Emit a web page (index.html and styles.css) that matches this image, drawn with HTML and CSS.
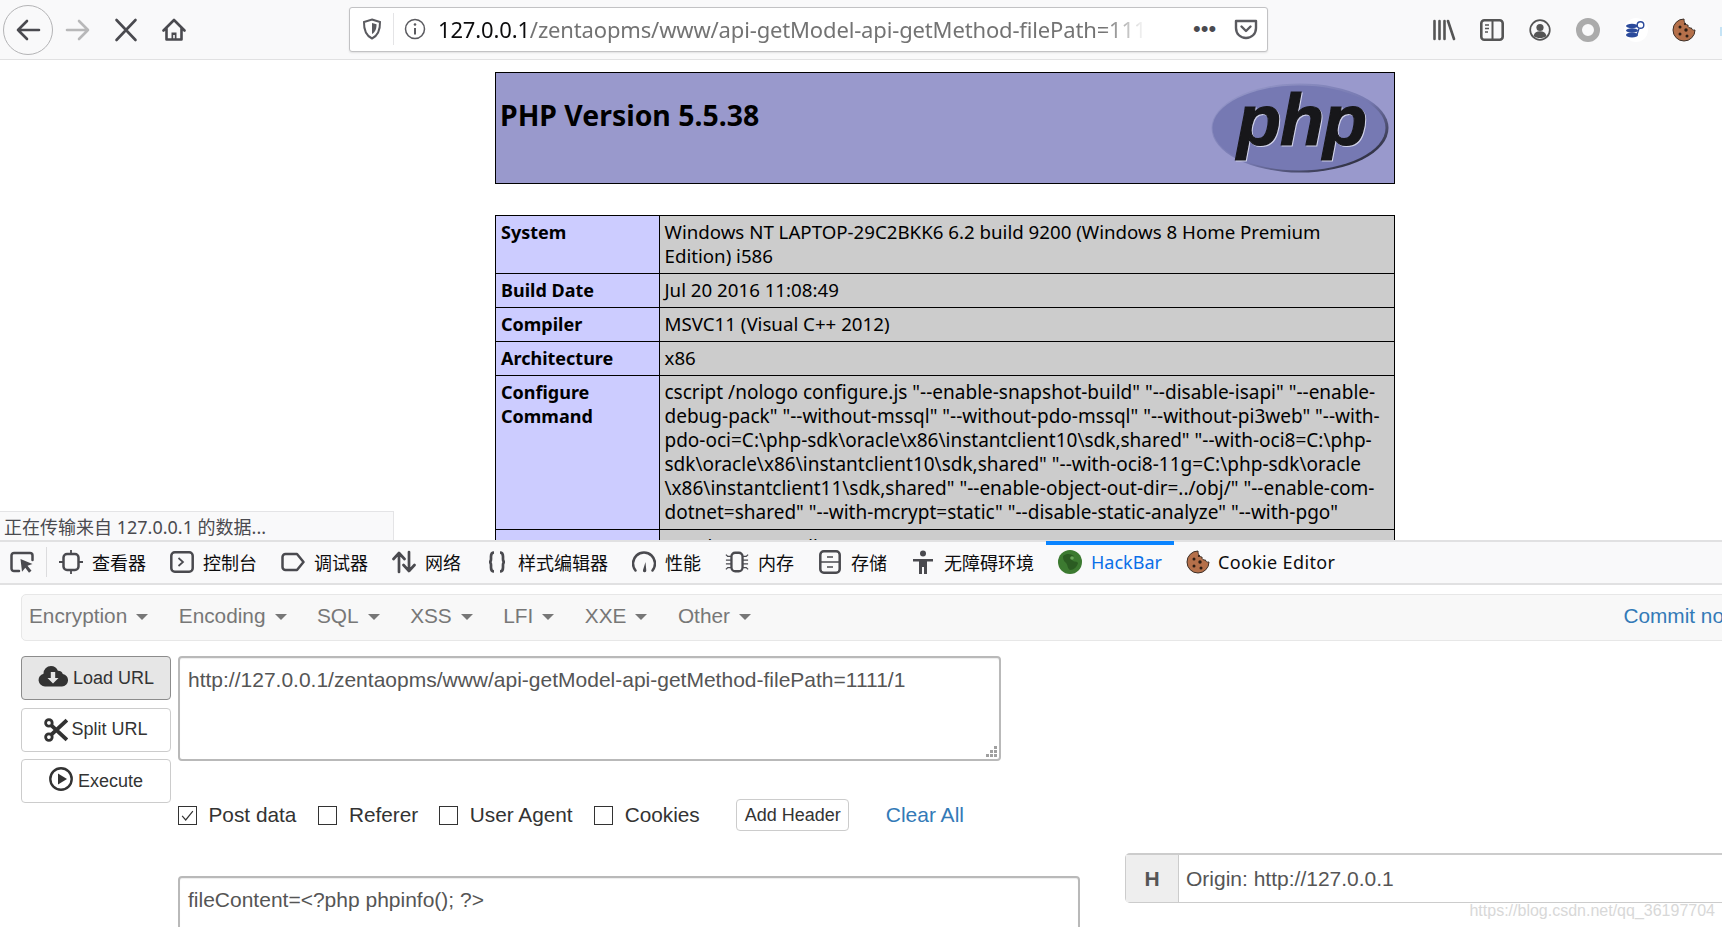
FILE: index.html
```html
<!DOCTYPE html>
<html lang="zh">
<head>
<meta charset="utf-8">
<title>phpinfo()</title>
<link rel="stylesheet" href="styles.css">
</head>
<body>
<div class="screen">
  <header class="navbar">
    <button class="back" aria-label="back">
      <svg viewBox="0 0 26 24" width="26" height="24"><path d="M24 12H3M12 3l-9 9 9 9" fill="none" stroke="#4a4a4f" stroke-width="2.6" stroke-linecap="round" stroke-linejoin="round"/></svg>
    </button>
    <span class="navbtn"><svg viewBox="0 0 26 24" width="26" height="24"><path d="M2 12h21M14 3l9 9-9 9" fill="none" stroke="#b8b8b9" stroke-width="2.6" stroke-linecap="round" stroke-linejoin="round"/></svg></span>
    <span class="navbtn"><svg viewBox="0 0 24 24" width="24" height="24"><path d="M2.500 2l19 20M21.500 2l-19 20" fill="none" stroke="#4a4a4f" stroke-width="2.600" stroke-linecap="round"/></svg></span>
    <span class="navbtn"><svg viewBox="0 0 24 24" width="24" height="24"><path d="M1.500 12.500L12 2l10.500 10.500M4.500 10v11.500h15V10" fill="none" stroke="#4a4a4f" stroke-width="2.600" stroke-linecap="round" stroke-linejoin="round"/><path d="M9.500 22v-7.500h5V22zM11.200 17v5h1.600v-5z" fill="#4a4a4f" fill-rule="evenodd"/></svg></span>
    <div class="urlbar">
      <span class="url-shield"><svg viewBox="0 0 20 22" width="20" height="22"><path d="M10 1.500l8 2.500c.2 7.500-1.800 13.500-8 16.500C3.800 17.500 1.800 11.500 2 4z" fill="none" stroke="#5a5a5f" stroke-width="2"/><path d="M10 5l4.500 1.300C14.600 10.500 13.500 14 10 16z" fill="#5a5a5f"/></svg></span>
      <span class="url-info"><svg viewBox="0 0 22 22" width="22" height="22"><circle cx="11" cy="11" r="9.500" fill="none" stroke="#5a5a5f" stroke-width="1.500"/><path d="M11 10v6.500" stroke="#5a5a5f" stroke-width="2"/><circle cx="11" cy="6.500" r="1.300" fill="#5a5a5f"/></svg></span>
      <div class="url-text"><span class="url-host">127.0.0.1</span>/zentaopms/www/api-getModel-api-getMethod-filePath=1111/1</div>
      <span class="url-dots">•••</span>
      <span class="url-pocket"><svg viewBox="0 0 24 22" width="24" height="22"><path d="M2 3h20v7c0 6-4.500 10-10 10S2 16 2 10z" fill="none" stroke="#5a5a5f" stroke-width="2.400" stroke-linejoin="round"/><path d="M7.500 8.500L12 13l4.500-4.500" fill="none" stroke="#5a5a5f" stroke-width="2.400" stroke-linecap="round" stroke-linejoin="round"/></svg></span>
    </div>
    <div class="nav-right">
      <span class="navbtn"><svg viewBox="0 0 24 24" width="24" height="24"><path d="M2.500 3v18M7.500 3v18M12.500 3v18" stroke="#555" stroke-width="2.600" stroke-linecap="round"/><path d="M16 3l6 18" stroke="#555" stroke-width="2.600" stroke-linecap="round"/></svg></span>
      <span class="navbtn"><svg viewBox="0 0 24 22" width="24" height="22"><rect x="1.300" y="1.300" width="21.400" height="19.400" rx="3" fill="none" stroke="#555" stroke-width="2.600"/><path d="M12.500 2v18" stroke="#555" stroke-width="2"/><path d="M5 6h4M5 9.500h4M5 13h3" stroke="#555" stroke-width="1.500"/></svg></span>
      <span class="navbtn"><svg viewBox="0 0 22 22" width="22" height="22"><circle cx="11" cy="11" r="9.800" fill="none" stroke="#555" stroke-width="1.700"/><circle cx="11" cy="8.500" r="3.600" fill="#555"/><path d="M4.500 17c.8-3.300 3.300-4.700 6.500-4.700s5.700 1.400 6.500 4.700c-3.500 2.800-9.500 2.800-13 0z" fill="#555"/></svg></span>
      <span class="navbtn"><svg viewBox="0 0 24 24" width="24" height="24"><circle cx="12" cy="12" r="9" fill="none" stroke="#ababab" stroke-width="6"/></svg></span>
      <span class="navbtn"><svg viewBox="0 0 24 24" width="24" height="24"><circle cx="12" cy="12" r="12" fill="#fff"/><ellipse cx="8" cy="8" rx="6" ry="2.200" fill="#2b4a9b"/><ellipse cx="8" cy="12.500" rx="6" ry="2.200" fill="#2b4a9b"/><ellipse cx="8" cy="17" rx="6" ry="2.400" fill="#2b4a9b"/><circle cx="16.500" cy="7" r="3.300" fill="none" stroke="#2b4a9b" stroke-width="1.400"/><path d="M15 10.500l-2 6" stroke="#2b4a9b" stroke-width="1.400"/></svg></span>
      <span class="navbtn"><svg viewBox="0 0 24 24" width="24" height="24"><path d="M12 1a11 11 0 1 0 11 11c-2 .5-3.500-.5-3.500-2-2 .5-4-1-3.500-3-2 0-4-2-4-6z" fill="#b5704a" stroke="#3d3028" stroke-width="1"/><circle cx="8" cy="9" r="1.500" fill="#2a1c14"/><circle cx="14" cy="12" r="1.700" fill="#2a1c14"/><circle cx="8" cy="16" r="1.500" fill="#2a1c14"/><circle cx="15" cy="18" r="1.500" fill="#2a1c14"/><circle cx="13" cy="6" r="1.100" fill="#2a1c14"/></svg></span>
    </div>
    <span class="edge-sliver"></span>
  </header>

  <main class="viewport">
    <div class="phpinfo">
      <table class="php-table php-head">
        <tr class="h">
          <td>
            <svg class="php-logo" viewBox="0 0 178 90" width="178" height="90" role="img" aria-label="PHP logo">
              <defs><linearGradient id="rim" x1="0" y1="0" x2="1" y2="1"><stop offset="0" stop-color="#9a9ccc"/><stop offset=".55" stop-color="#7578b0"/><stop offset="1" stop-color="#111"/></linearGradient></defs>
              <ellipse cx="89" cy="45" rx="88.500" ry="44.500" fill="url(#rim)"/>
              <ellipse cx="88" cy="45" rx="86.500" ry="42.500" fill="#7679b3"/>
              <text x="26" y="62" class="php-mark">php</text>
            </svg>
            <h1 class="p">PHP Version 5.5.38</h1>
          </td>
        </tr>
      </table>
      <table class="php-table php-info">
        <colgroup><col class="col-e"><col></colgroup>
        <tr><td class="e">System</td><td class="v">Windows NT LAPTOP-29C2BKK6 6.2 build 9200 (Windows 8 Home Premium<br>Edition) i586</td></tr>
        <tr><td class="e">Build Date</td><td class="v">Jul 20 2016 11:08:49</td></tr>
        <tr><td class="e">Compiler</td><td class="v">MSVC11 (Visual C++ 2012)</td></tr>
        <tr><td class="e">Architecture</td><td class="v">x86</td></tr>
        <tr><td class="e">Configure<br>Command</td><td class="v v-cfg">cscript /nologo configure.js "--enable-snapshot-build" "--disable-isapi" "--enable-<br>debug-pack" "--without-mssql" "--without-pdo-mssql" "--without-pi3web" "--with-<br>pdo-oci=C:\php-sdk\oracle\x86\instantclient10\sdk,shared" "--with-oci8=C:\php-<br>sdk\oracle\x86\instantclient10\sdk,shared" "--with-oci8-11g=C:\php-sdk\oracle<br>\x86\instantclient11\sdk,shared" "--enable-object-out-dir=../obj/" "--enable-com-<br>dotnet=shared" "--with-mcrypt=static" "--disable-static-analyze" "--with-pgo"</td></tr>
        <tr><td class="e">Server API</td><td class="v">Apache 2.0 Handler</td></tr>
      </table>
    </div>
    <div class="status">正在传输来自 127.0.0.1 的数据...</div>
  </main>

  <nav class="devtools">
    <span class="picker"><svg viewBox="0 0 24 24" width="24" height="24"><path d="M9 21H4a2.500 2.500 0 0 1-2.500-2.500v-13A2.500 2.500 0 0 1 4 3h16a2.500 2.500 0 0 1 2.500 2.500V10" fill="none" stroke="#4a4a4f" stroke-width="2.500" stroke-linecap="round"/><path d="M10.500 9l12 5-5 1.800 4 5-2.500 2-3.700-5-3.300 4z" fill="#4a4a4f"/></svg></span>
    <span class="dt-sep"></span>
    <a class="tab"><svg viewBox="0 0 24 24"><rect x="4.500" y="4" width="15" height="16" rx="3.500" fill="none" stroke="#4a4a4f" stroke-width="2.500"/><path d="M12 0v4M12 20v4M0 12h4.500M19.500 12H24" stroke="#4a4a4f" stroke-width="1.800"/></svg>查看器</a>
    <a class="tab"><svg viewBox="0 0 24 24"><rect x="1.300" y="2.300" width="21.400" height="19.400" rx="3.500" fill="none" stroke="#4a4a4f" stroke-width="2.500"/><path d="M8.500 8l4.500 4-4.500 4" fill="none" stroke="#4a4a4f" stroke-width="1.700"/></svg>控制台</a>
    <a class="tab"><svg viewBox="0 0 24 24"><path d="M4.500 4h11.500l6.500 8-6.500 8H4.500a3 3 0 0 1-3-3V7a3 3 0 0 1 3-3z" fill="none" stroke="#4a4a4f" stroke-width="2.500" stroke-linejoin="round"/></svg>调试器</a>
    <a class="tab"><svg viewBox="0 0 24 24"><path d="M7 22V3M1.500 9L7 3l5.500 6M17 2v19M11.500 15l5.500 6 5.500-6" fill="none" stroke="#4a4a4f" stroke-width="2.700" stroke-linecap="round" stroke-linejoin="round"/></svg>网络</a>
    <a class="tab"><svg viewBox="0 0 24 24"><path d="M9 2.500c-2.500 0-3 1.500-3 4v2.500c0 2-.8 3-2 3 1.200 0 2 1 2 3v2.500c0 2.500.5 4 3 4M15 2.500c2.500 0 3 1.500 3 4v2.500c0 2 .8 3 2 3-1.200 0-2 1-2 3v2.500c0 2.500-.5 4-3 4" fill="none" stroke="#4a4a4f" stroke-width="2.700"/></svg>样式编辑器</a>
    <a class="tab"><svg viewBox="0 0 24 24"><path d="M3.500 20.500A11 11 0 1 1 20.500 20.500" fill="none" stroke="#4a4a4f" stroke-width="2.500" stroke-linecap="round"/><path d="M11 20l2.500-8 .8 8.500a1.700 1.700 0 1 1-3.300-.5z" fill="#4a4a4f"/></svg>性能</a>
    <a class="tab"><svg viewBox="0 0 26 24"><rect x="7" y="2" width="12" height="20" rx="4" fill="none" stroke="#4a4a4f" stroke-width="2.500"/><path d="M7 6H3L1 4M7 10H1M7 14H1M7 18H3l-2 2M19 6h4l2-2M19 10h6M19 14h6M19 18h4l2 2" fill="none" stroke="#4a4a4f" stroke-width="1.400"/></svg>内存</a>
    <a class="tab"><svg viewBox="0 0 22 24"><rect x="1.300" y="1.300" width="19.400" height="21.400" rx="3.500" fill="none" stroke="#4a4a4f" stroke-width="2.500"/><path d="M2 12h18M8 7h6M8 17h6" stroke="#4a4a4f" stroke-width="1.700"/></svg>存储</a>
    <a class="tab"><svg viewBox="0 0 22 24"><circle cx="11" cy="3.500" r="3" fill="#4a4a4f"/><path d="M1 9h20v2.500h-6V24h-3v-7h-2v7H7V11.500H1z" fill="#4a4a4f"/></svg>无障碍环境</a>
    <a class="tab tab-active"><svg viewBox="0 0 24 24"><circle cx="12" cy="12" r="12" fill="#3c7a30"/><path d="M5 6c4-3 8-2 11 0-2 1-3 3-1 5 2 1 4 0 5 2-1 4-4 7-8 7-3-2-2-5-4-7s-3-3-3-7z" fill="#2b5c22"/><circle cx="14" cy="8" r="1.800" fill="#6aa75a"/></svg>HackBar</a>
    <a class="tab tab-cookie"><svg viewBox="0 0 24 24"><path d="M12 1a11 11 0 1 0 11 11c-2 .5-3.500-.5-3.500-2-2 .5-4-1-3.500-3-2 0-4-2-4-6z" fill="#b5704a" stroke="#3d3028" stroke-width="1"/><circle cx="8" cy="9" r="1.500" fill="#2a1c14"/><circle cx="14" cy="12" r="1.700" fill="#2a1c14"/><circle cx="8" cy="16" r="1.500" fill="#2a1c14"/><circle cx="15" cy="18" r="1.500" fill="#2a1c14"/><circle cx="13" cy="6" r="1.100" fill="#2a1c14"/></svg>Cookie Editor</a>
  </nav>

  <section class="hackbar">
    <div class="hb-nav">
      <span class="hb-menu">Encryption<i class="caret"></i></span>
      <span class="hb-menu">Encoding<i class="caret"></i></span>
      <span class="hb-menu">SQL<i class="caret"></i></span>
      <span class="hb-menu">XSS<i class="caret"></i></span>
      <span class="hb-menu">LFI<i class="caret"></i></span>
      <span class="hb-menu">XXE<i class="caret"></i></span>
      <span class="hb-menu">Other<i class="caret"></i></span>
      <a class="hb-commit">Commit now</a>
    </div>
    <div class="hb-body">
      <div class="hb-actions">
        <button class="hb-btn hb-btn-on"><svg class="btn-ico" viewBox="0 0 30 22" width="30" height="22"><path d="M7 21.500a6.500 6.500 0 0 1-1.500-12.800A7.500 7.500 0 0 1 13 1c3.200 0 5.800 2 6.900 4.800a5 5 0 0 1 4.900 3.200A6.300 6.300 0 0 1 24 21.500z" fill="#333"/><path d="M12.800 7h4.400v6h3.300L15 18.500 9.500 13h3.300z" fill="#e6e6e6"/></svg>Load URL</button>
        <button class="hb-btn hb-btn-cut"><svg viewBox="0 0 22 22" width="24" height="24"><path d="M7 7l14 13M7 15L21 2" fill="none" stroke="#333" stroke-width="3.600"/><circle cx="4.500" cy="4.500" r="3" fill="none" stroke="#333" stroke-width="2.600"/><circle cx="4.500" cy="17.500" r="3" fill="none" stroke="#333" stroke-width="2.600"/></svg>Split URL</button>
        <button class="hb-btn"><svg class="btn-ico" viewBox="0 0 24 24" width="24" height="24"><circle cx="12" cy="12" r="10.700" fill="none" stroke="#333" stroke-width="2.400"/><path d="M9 6.500l9 5.500-9 5.500z" fill="#333"/></svg>Execute</button>
      </div>
      <div class="hb-main">
        <div class="url-wrap">
          <textarea class="hb-input hb-url" spellcheck="false">http://127.0.0.1/zentaopms/www/api-getModel-api-getMethod-filePath=1111/1</textarea>
          <svg class="grip" viewBox="0 0 11 11" width="11" height="11"><path d="M8 0h3v3H8zM8 4h3v3H8zM4 4h3v3H4zM8 8h3v3H8zM4 8h3v3H4zM0 8h3v3H0z" fill="#a0a0a0"/></svg>
        </div>
        <div class="hb-opts">
          <label class="opt opt-post"><span class="cb"><svg viewBox="0 0 19 19" width="17" height="17"><path d="M3.500 10l4 4.500 8-10" fill="none" stroke="#333" stroke-width="1.300"/></svg></span>Post data</label>
          <label class="opt opt-ref"><span class="cb"></span>Referer</label>
          <label class="opt opt-ua"><span class="cb"></span>User Agent</label>
          <label class="opt opt-ck"><span class="cb"></span>Cookies</label>
          <button class="hb-add">Add Header</button>
          <a class="hb-clear">Clear All</a>
        </div>
        <div class="hb-lower">
          <textarea class="hb-input hb-post" spellcheck="false">fileContent=&lt;?php phpinfo(); ?&gt;</textarea>
          <div class="hb-header"><span class="hb-h">H</span><span class="hb-hval">Origin: http://127.0.0.1</span></div>
        </div>
      </div>
    </div>
    <span class="watermark">https://blog.csdn.net/qq_36197704</span>
  </section>
</div>
</body>
</html>
```

FILE: styles.css
```css
* { box-sizing: border-box; }
html, body { margin: 0; height: 100%; background: #fff; overflow: hidden; }
button, textarea { font: inherit; }
.screen { width: 1722px; height: 927px; display: flex; flex-direction: column; overflow: hidden; font-family: "Liberation Sans", Arial, sans-serif; }

/* browser toolbar */
.navbar { flex: 0 0 60px; display: flex; align-items: center; padding-left: 3px; background: #f9f9fa; border-bottom: 1px solid #e1e1e2; }
.back { width: 50px; height: 50px; padding: 0; border: 1px solid #b4b4b6; border-radius: 50%; background: #f9f9fa; display: flex; align-items: center; justify-content: center; margin-right: 1px; }
.navbtn { width: 48px; height: 48px; flex: none; display: flex; align-items: center; justify-content: center; }
.urlbar { width: 919px; height: 45px; margin-top: -1px; margin-left: 151px; flex: none; display: flex; align-items: center; background: #fff; border: 1px solid #c2c2c4; border-radius: 3px; box-shadow: 0 1px 2px rgba(0,0,0,.1); }
.url-shield { width: 44px; display: flex; justify-content: center; border-right: 1px solid #e4e4e6; height: 32px; align-items: center; }
.url-info { width: 42px; display: flex; justify-content: center; }
.url-text { width: 708px; margin-left: 2px; white-space: nowrap; overflow: hidden; font: 22px "Noto Sans", sans-serif; letter-spacing: -.15px; color: #737373; -webkit-mask-image: linear-gradient(to right, #000 94%, transparent 100%); mask-image: linear-gradient(to right, #000 94%, transparent 100%); }
.url-host { color: #0c0c0d; }
.url-dots { margin-left: 47px; width: 30px; font-size: 22px; line-height: 22px; color: #4a4a4f; }
.url-pocket { margin-left: 11px; display: flex; }
.nav-right { display: flex; margin-left: 152px; }
.edge-sliver { width: 2px; height: 9px; background: #c5e3f5; position: absolute; left: 1720px; top: 27px; }

/* page content */
.viewport { flex: 0 0 480px; position: relative; overflow: hidden; background: #fff; }
.phpinfo { width: 900px; margin-left: 495px; padding-top: 12px; font-family: "Noto Sans", sans-serif; color: #000; }
.php-table { width: 900px; border-collapse: collapse; table-layout: fixed; }
.php-table td { border: 1px solid #000; vertical-align: top; }
.php-head { margin-bottom: 31px; }
.h td { background: #9999cc; height: 111px; padding: 5px 4px; }
.p { margin: 20px 0 0; font-size: 28.400px; line-height: 34px; font-weight: 700; }
.php-logo { float: right; margin: 5px 1px 0 0; }
.php-mark { font: italic 700 72px "Liberation Sans", sans-serif; fill: #17171a; stroke: #17171a; stroke-width: 1.200px; letter-spacing: -1px; filter: drop-shadow(1px 1px 0 #d0d2e8); }
.col-e { width: 163.500px; }
.e, .v { line-height: 24px; padding: 3.500px 5px 5.500px; }
.e { font-size: 18px; background: #ccccff; font-weight: 700; }
.v { font-size: 18.700px; background: #cccccc; white-space: nowrap; overflow: hidden; }
.v-cfg { font-size: 19px; }
.status { position: absolute; left: 0; bottom: 0; width: 394px; height: 29px; padding: 2px 0 0 4px; background: #f9f9fa; border: 1px solid #e4e4e6; border-width: 1px 1px 0 0; font: 18px/26px "Noto Sans", "Noto Sans CJK SC", sans-serif; color: #4a4a4f; white-space: nowrap; }

/* devtools tabs */
.devtools { flex: 0 0 45px; display: flex; align-items: center; padding-bottom: 2px; background: #f9f9fa; border-top: 2px solid #e1e1e2; border-bottom: 2px solid #e1e1e2; font: 18px "Noto Sans", "Noto Sans CJK SC", sans-serif; color: #0c0c0d; }
.picker { width: 46px; padding-left: 10px; display: flex; }
.dt-sep { width: 1px; height: 30px; background: #dcdcde; }
.tab { display: flex; align-items: center; gap: 9px; height: 39px; padding: 0 12px; white-space: nowrap; position: relative; }
.tab svg { width: 24px; height: 24px; flex: none; }
.tab-active { color: #0a6fe8; }
.tab-active::before { content: ""; position: absolute; left: 0; right: 0; top: -1px; height: 4px; background: #0a84ff; }
.tab-cookie { gap: 8px; letter-spacing: .35px; }

/* hackbar */
.hackbar { flex: 1; min-height: 0; position: relative; overflow: hidden; background: #fff; font-size: 20.800px; color: #333; }
.hb-nav { height: 47px; margin: 9px -60px 0 21px; display: flex; align-items: center; padding: 0 0 4px 7px; background: #f8f8f8; border: 1px solid #e7e7e7; border-radius: 5px; color: #777; }
.hb-menu { white-space: nowrap; margin-right: 30.500px; display: flex; align-items: center; }
.caret { width: 0; height: 0; margin-left: 9px; border-top: 6px solid #777; border-left: 6px solid transparent; border-right: 6px solid transparent; margin-top: 2px; }
.hb-commit { margin-left: auto; margin-right: 42px; color: #337ab7; white-space: nowrap; }
.hb-body { display: flex; gap: 7px; margin: 15px 0 0 21px; }
.hb-actions { width: 150px; flex: none; display: flex; flex-direction: column; gap: 7.500px; }
.hb-btn { height: 44px; padding: 0; display: flex; align-items: center; justify-content: center; gap: 5px; font-size: 18px; color: #333; background: #fff; border: 1px solid #ccc; border-radius: 4px; }
.hb-btn-cut { gap: 3px; }
.btn-ico { margin-top: -5px; }
.hb-btn-on { background: #e6e6e6; border-color: #8c8c8c; }
.hb-main { flex: 1; min-width: 0; }
.url-wrap { position: relative; width: 823px; }
.grip { position: absolute; right: 4px; bottom: 4px; }
.hb-input { display: block; padding: 8px 8px; border: 2px solid #b9b9b9; border-radius: 4px; color: #555; line-height: 28px; font-size: 21px; font-family: "Liberation Sans", Arial, sans-serif; background: #fff; outline: none; resize: none; box-shadow: inset 0 1px 1px rgba(0,0,0,.075); }
.hb-url { width: 823px; height: 105px; }
.hb-opts { display: flex; align-items: center; height: 32px; margin-top: 38px; }
.opt { display: flex; align-items: center; gap: 11.500px; white-space: nowrap; }
.cb { width: 19px; height: 19px; flex: none; border: 1px solid #333; display: flex; align-items: center; justify-content: center; background: #fff; }
.opt-post { margin-right: 22px; }
.opt-ref { margin-right: 21px; }
.opt-ua { margin-right: 21.500px; }
.opt-ck { margin-right: 36.500px; }
.hb-add { height: 32px; width: 113px; padding: 0; font-size: 18px; color: #333; background: #fff; border: 1px solid #ccc; border-radius: 4px; }
.hb-clear { margin-left: 36.500px; font-size: 21px; color: #337ab7; white-space: nowrap; }
.hb-lower { display: flex; align-items: flex-start; margin-top: 22px; margin-right: -60px; }
.hb-post { width: 902px; height: 120px; margin-top: 23px; }
.hb-header { flex: 1; margin-left: 45px; height: 50px; display: flex; font-size: 21px; border: 1px solid #ccc; border-top-width: 2px; border-radius: 5px; }
.hb-h { width: 53px; flex: none; display: flex; align-items: center; justify-content: center; font-weight: 700; background: #eee; border-right: 1px solid #ccc; color: #555; }
.hb-hval { display: flex; align-items: center; padding-left: 7px; color: #555; }
.watermark { position: absolute; right: 7px; bottom: 7px; font-size: 16px; color: #d8d8d8; white-space: nowrap; }
```
